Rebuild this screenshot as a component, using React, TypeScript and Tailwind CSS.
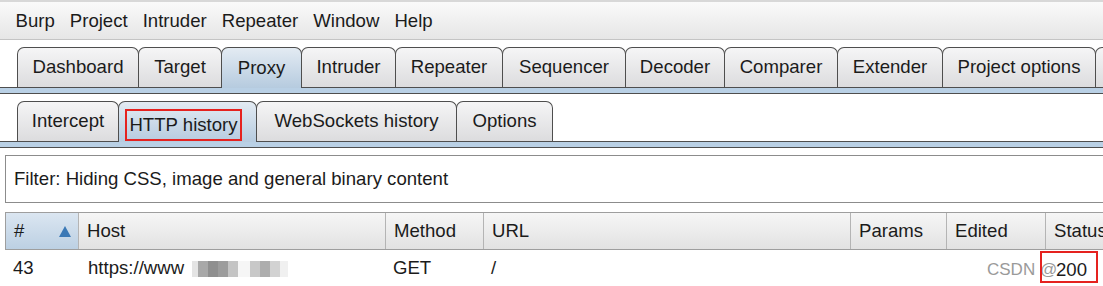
import React from "react"

const topTabs = [
  { label: "Dashboard", w: "w-[122px]" },
  { label: "Target", w: "w-[84px]" },
  { label: "Proxy", w: "w-[81px]", active: true },
  { label: "Intruder", w: "w-[95px]" },
  { label: "Repeater", w: "w-[108px]" },
  { label: "Sequencer", w: "w-[124px]" },
  { label: "Decoder", w: "w-[100px]" },
  { label: "Comparer", w: "w-[114px]" },
  { label: "Extender", w: "w-[106px]" },
  { label: "Project options", w: "w-[154px]" },
  { label: "", w: "w-[40px]" },
]

const subTabs = [
  { label: "Intercept", w: "w-[102px]" },
  { label: "HTTP history", w: "w-[139px]", active: true, boxed: true },
  { label: "WebSockets history", w: "w-[201px]" },
  { label: "Options", w: "w-[97px]" },
]

const columns = [
  { label: "#", w: "w-[73px]", sorted: true },
  { label: "Host", w: "w-[307px]" },
  { label: "Method", w: "w-[98px]" },
  { label: "URL", w: "w-[367px]" },
  { label: "Params", w: "w-[96px]" },
  { label: "Edited", w: "w-[99px]" },
  { label: "Status", w: "w-[80px]" },
]

// mosaic blocks standing in for the blurred host name
const blur = [
  "w-[6px] bg-[#e4e4e4]",
  "w-[10px] bg-[#a8a8a8]",
  "w-[10px] bg-[#8f8f8f]",
  "w-[10px] bg-[#9c9c9c]",
  "w-[10px] bg-[#c4c4c4]",
  "w-[12px] bg-[#f6f6f6]",
  "w-[10px] bg-[#c8c8c8]",
  "w-[10px] bg-[#adadad]",
  "w-[10px] bg-[#d2d2d2]",
  "w-[8px] bg-[#f0f0f0]",
]

type Tab = { label: string; w: string; active?: boolean; boxed?: boolean }

function TabRow({ tabs }: { tabs: Tab[] }) {
  return (
    <div>
      <div className="flex items-end h-[40px] pl-[17px]">
        {tabs.map((t, i) => (
          <div
            key={i}
            className={
              (t.active
                ? "relative z-10 h-[41px] -mb-px bg-gradient-to-b from-[#e3ebf3] to-[#b6cbdf] "
                : "h-[40px] bg-gradient-to-b from-[#f5f5f6] to-[#dcdcde] ") +
              (i > 0 ? "-ml-px " : "") +
              t.w +
              " shrink-0 flex items-center justify-center border-t border-x border-[#4e4e4e] rounded-t-[7px] text-[18.6px] text-[#1b1b1b] whitespace-nowrap"
            }
          >
            {t.boxed ? (
              <span className="border-2 border-[#e5221f] px-[2px] h-[32px] flex items-center mt-[6px] mr-[8px]">{t.label}</span>
            ) : (
              <span className="-mt-px">{t.label}</span>
            )}
          </div>
        ))}
      </div>
      <div className="h-[7px] bg-[#b9d0e5] border-y border-[#4e4e4e]" />
    </div>
  )
}

export default function App() {
  return (
    <div
      className="w-[1103px] h-[286px] overflow-hidden bg-white text-[#1b1b1b]"
      style={{ fontFamily: '"Liberation Sans", Arial, sans-serif' }}
    >
      <div className="h-[40px] border-t-2 border-b border-t-[#d8d8d8] border-b-[#c4c4c4] bg-gradient-to-b from-[#fafafa] to-[#e6e6e6] flex items-center pl-[8px] text-[18.6px]">
        {["Burp", "Project", "Intruder", "Repeater", "Window", "Help"].map((m) => (
          <span key={m} className="px-[7.5px]">
            {m}
          </span>
        ))}
      </div>

      <div className="pt-[7px]">
        <TabRow tabs={topTabs} />
      </div>

      <div className="pt-[7px]">
        <TabRow tabs={subTabs} />
      </div>

      <div className="pt-[7px] pl-[5px]">
        <div className="h-[48px] border border-[#8c8c8c] border-r-0 bg-white flex items-center pl-[8px] text-[18.6px]">
          Filter: Hiding CSS, image and general binary content
        </div>
      </div>

      <div className="pt-[9px] pl-[5px]">
        <div className="flex h-[38px] border-y border-[#9e9e9e] border-l border-l-[#9e9e9e] text-[18.6px]">
          {columns.map((c) => (
            <div
              key={c.label}
              className={
                c.w +
                " shrink-0 flex items-center justify-between pl-[8px] pr-[7px] border-r border-[#b4b4b4] " +
                (c.sorted
                  ? "bg-gradient-to-b from-[#dbe6f1] to-[#bcd0e3]"
                  : "bg-gradient-to-b from-[#f6f6f6] to-[#e2e2e2]")
              }
            >
              <span className="whitespace-nowrap">{c.label}</span>
              {c.sorted && (
                <svg width="12" height="11" viewBox="0 0 12 11">
                  <polygon points="6,0 12,11 0,11" fill="#3b79b6" />
                </svg>
              )}
            </div>
          ))}
        </div>
        <div className="relative flex h-[36px] items-center text-[18.6px]">
          <div className="w-[73px] shrink-0 pl-[8px]">43</div>
          <div className="w-[307px] shrink-0 pl-[10px] flex items-center">
            <span>https://www</span>
            <div className="flex ml-[8px] mt-[2px]">
              {blur.map((b, i) => (
                <div key={i} className={b + " h-[16px]"} />
              ))}
            </div>
          </div>
          <div className="w-[98px] shrink-0 pl-[8px]">GET</div>
          <div className="w-[367px] shrink-0 pl-[8px]">/</div>
          <div className="flex-1" />
          <div className="absolute left-[982px] top-[7px] text-[17px] text-[#9a9a9a] whitespace-nowrap">
            CSDN @
          </div>
          <div className="absolute left-[1051px] top-[6px] text-[18.6px] text-[#1b1b1b]">200</div>
          <div className="absolute left-[1035px] top-[1px] w-[58px] h-[32px] border-2 border-[#e5221f]" />
        </div>
      </div>
    </div>
  )
}
